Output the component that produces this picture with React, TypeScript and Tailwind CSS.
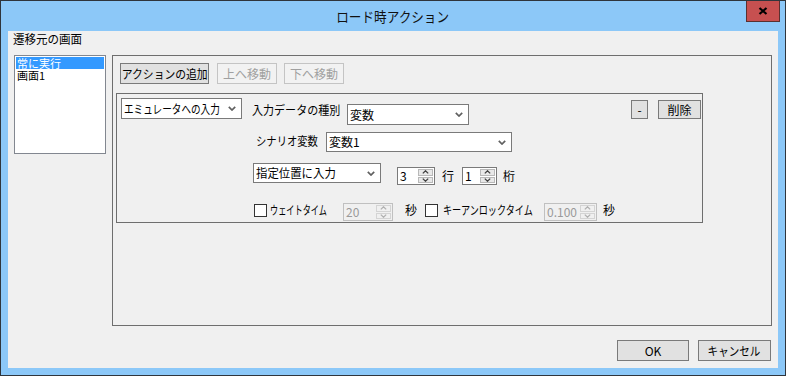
import React from "react";

const Chevron = ({ color = "#606060" }: { color?: string }) => (
  <svg width="8" height="5" viewBox="0 0 8 5">
    <path d="M0.8 0.8 L4 4 L7.2 0.8" fill="none" stroke={color} strokeWidth="1.7" />
  </svg>
);

const SmallUp = ({ color = "#404040" }: { color?: string }) => (
  <svg width="7" height="4" viewBox="0 0 7 4">
    <path d="M0.8 3.4 L3.5 0.8 L6.2 3.4" fill="none" stroke={color} strokeWidth="1.3" />
  </svg>
);
const SmallDown = ({ color = "#404040" }: { color?: string }) => (
  <svg width="7" height="4" viewBox="0 0 7 4">
    <path d="M0.8 0.6 L3.5 3.2 L6.2 0.6" fill="none" stroke={color} strokeWidth="1.3" />
  </svg>
);

function Combo({ text, className, sx = "" }: { text: string; className: string; sx?: string }) {
  return (
    <div
      className={`relative flex items-center bg-white border border-[#7a7a7a] pl-[2px] ${className}`}
    >
      <span className={`inline-block origin-left text-[12px] leading-[14px] whitespace-nowrap ${sx}`}>
        {text}
      </span>
      <div className="absolute right-[5px] top-0 bottom-0 flex items-center">
        <Chevron />
      </div>
    </div>
  );
}

function Spinner({
  text,
  className,
  disabled = false,
}: {
  text: string;
  className: string;
  disabled?: boolean;
}) {
  return (
    <div
      className={`flex items-stretch border ${
        disabled ? "border-[#c0c0c0] bg-[#f0f0f0] text-[#9a9a9a]" : "border-[#7a7a7a] bg-white text-black"
      } ${className}`}
    >
      <div className="flex-1 pl-[2px] text-[12px] leading-[16px] whitespace-nowrap">{text}</div>
      <div className="flex flex-col w-[15px] m-[1px] ml-0 gap-[1px]">
        <div
          className={`flex-1 flex items-center justify-center border ${
            disabled ? "border-[#d4d4d4] bg-[#f0f0f0]" : "border-[#b8b8b8] bg-[#e8e8e8]"
          }`}
        >
          <SmallUp color={disabled ? "#b0b0b0" : "#404040"} />
        </div>
        <div
          className={`flex-1 flex items-center justify-center border ${
            disabled ? "border-[#d4d4d4] bg-[#f0f0f0]" : "border-[#b8b8b8] bg-[#e8e8e8]"
          }`}
        >
          <SmallDown color={disabled ? "#b0b0b0" : "#404040"} />
        </div>
      </div>
    </div>
  );
}

function Btn({
  text,
  className,
  disabled = false,
  sx = "",
}: {
  text: string;
  className: string;
  disabled?: boolean;
  sx?: string;
}) {
  return (
    <div
      className={`flex items-center justify-center border text-[12px] leading-[14px] whitespace-nowrap ${
        disabled
          ? "border-[#c4c4c4] bg-[#f2f2f2] text-[#a0a0a0]"
          : "border-[#7a7a7a] bg-[#e1e1e1] text-black"
      } ${className}`}
    >
      <span className={`inline-block origin-center ${sx}`}>{text}</span>
    </div>
  );
}

function Label({ text, className, sx = "" }: { text: string; className: string; sx?: string }) {
  return (
    <div className={`text-[12px] leading-[14px] whitespace-nowrap ${className}`}>
      <span className={`inline-block origin-left ${sx}`}>{text}</span>
    </div>
  );
}

const Check = ({ className }: { className: string }) => (
  <div className={`w-[13px] h-[13px] bg-white border border-[#333333] ${className}`} />
);

export default function App() {
  return (
    <div className="w-[786px] h-[376px] border border-[#2f353c] bg-[#8cc8f8] flex flex-col font-['Noto_Sans_CJK_JP',sans-serif] text-black">
      {/* title bar */}
      <div className="h-[30px] relative flex items-center justify-center">
        <span className="inline-block text-[14px] leading-[18px] text-[#111] scale-x-[0.9]">ロード時アクション</span>
        <div className="absolute top-0 right-[5px] w-[34px] h-[21px] bg-[#c75050] border-x border-b border-[#5a3030] flex items-center justify-center">
          <svg width="10" height="8" viewBox="0 0 10 8">
            <path d="M1.5 1 L8.5 7 M8.5 1 L1.5 7" stroke="#000" strokeWidth="2.2" />
          </svg>
        </div>
      </div>

      {/* client area */}
      <div className="mx-[7px] h-[337px] bg-[#f0f0f0] flex flex-col">
        <Label text="遷移元の画面" className="ml-[5px] mt-[1px] h-[14px]" sx="scale-x-[0.96]" />

        <div className="flex items-start ml-[6px] mt-[9px] gap-[6px]">
          {/* list box */}
          <div className="w-[92px] h-[99px] bg-white border border-[#828790] p-[1px] flex flex-col">
            <div className="h-[12px] bg-[#3399ff] text-white text-[11px] leading-[12px] pl-[1px] whitespace-nowrap">
              常に実行
            </div>
            <div className="h-[12px] text-[11px] leading-[12px] pl-[1px] whitespace-nowrap">画面1</div>
          </div>

          {/* main panel */}
          <div className="w-[660px] h-[271px] border border-[#6e6e6e] flex flex-col">
            <div className="flex items-start mt-[7px] ml-[7px]">
              <Btn
                text="アクションの追加"
                className="w-[89px] h-[21px] border-[#6a6a6a] bg-[#dedede]"
                sx="scale-x-[0.9]"
              />
              <Btn text="上へ移動" className="ml-[8px] w-[60px] h-[21px]" disabled />
              <Btn text="下へ移動" className="ml-[7px] w-[60px] h-[21px]" disabled />
            </div>

            {/* action box */}
            <div className="ml-[3px] mt-[9px] w-[587px] h-[130px] border border-[#6e6e6e] flex flex-col">
              {/* row A */}
              <div className="flex items-start h-[31px]">
                <Combo
                  text="エミュレータへの入力"
                  className="ml-[4px] mt-[4px] w-[121px] h-[21px]"
                  sx="scale-x-[0.8]"
                />
                <Label text="入力データの種別" className="ml-[10px] mt-[9px] w-[95px]" sx="scale-x-[0.92]" />
                <Combo text="変数" className="mt-[10px] w-[122px] h-[21px]" />
                <Btn text="-" className="ml-[162px] mt-[6px] w-[17px] h-[19px]" />
                <Btn text="削除" className="ml-[10px] mt-[6px] w-[43px] h-[19px]" />
              </div>

              {/* row B */}
              <div className="flex items-start h-[27px]">
                <Label text="シナリオ変数" className="ml-[139px] mt-[9px] w-[70px]" sx="scale-x-[0.86]" />
                <Combo text="変数1" className="mt-[7px] w-[186px] h-[20px]" />
              </div>

              {/* row C */}
              <div className="flex items-start h-[33px]">
                <Combo
                  text="指定位置に入力"
                  className="ml-[136px] mt-[11px] w-[128px] h-[20px]"
                  sx="scale-x-[0.95]"
                />
                <Spinner text="3" className="ml-[16px] mt-[15px] w-[38px] h-[18px]" />
                <Label text="行" className="ml-[7px] mt-[17px] w-[13px]" />
                <Spinner text="1" className="ml-[7px] mt-[15px] w-[35px] h-[18px]" />
                <Label text="桁" className="ml-[6px] mt-[17px]" />
              </div>

              {/* row D */}
              <div className="flex items-start">
                <Check className="ml-[137px] mt-[19px]" />
                <Label text="ウェイトタイム" className="ml-[3px] mt-[18px] w-[73px]" sx="scale-x-[0.68]" />
                <Spinner text="20" className="mt-[18px] w-[50px] h-[18px]" disabled />
                <Label text="秒" className="ml-[12px] mt-[18px] w-[12px]" />
                <Check className="ml-[8px] mt-[19px]" />
                <Label
                  text="キーアンロックタイム"
                  className="ml-[5px] mt-[18px] w-[101px]"
                  sx="scale-x-[0.76]"
                />
                <Spinner text="0.100" className="mt-[18px] w-[53px] h-[18px]" disabled />
                <Label text="秒" className="ml-[6px] mt-[18px]" />
              </div>
            </div>
          </div>
        </div>

        {/* bottom buttons */}
        <div className="flex justify-end mr-[7px] mt-[14px] gap-[9px]">
          <Btn text="OK" className="w-[72px] h-[21px]" />
          <Btn text="キャンセル" className="w-[73px] h-[21px]" sx="scale-x-[0.88]" />
        </div>
      </div>
    </div>
  );
}
